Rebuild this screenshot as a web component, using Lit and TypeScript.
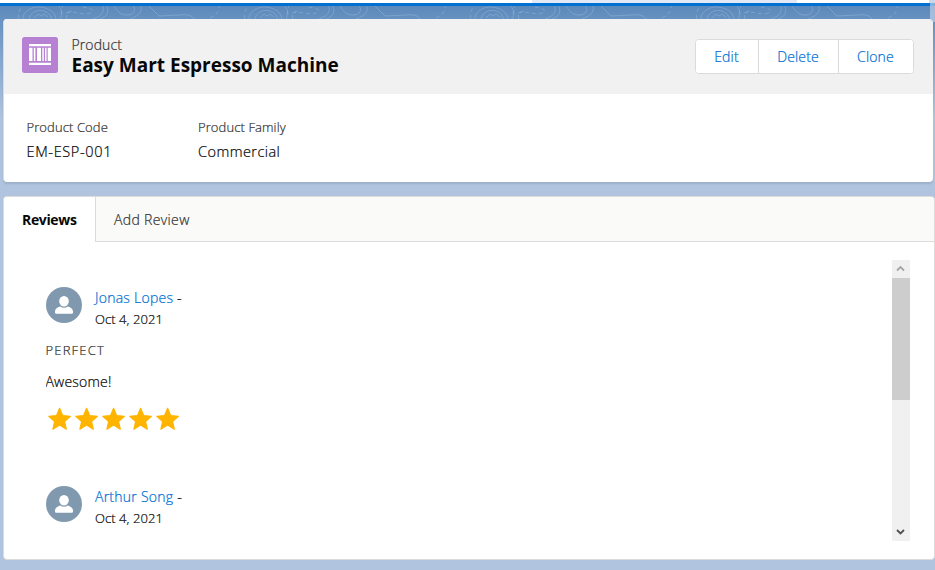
import { LitElement, html, svg, css } from "lit";
import { customElement, property } from "lit/decorators.js";

interface Review { author: string; date: string; title?: string; body?: string; rating?: number; }

const REVIEWS: Review[] = [
  { author: "Jonas Lopes", date: "Oct 4, 2021", title: "PERFECT", body: "Awesome!", rating: 5 },
  { author: "Arthur Song", date: "Oct 4, 2021" },
];

const STAR = "M12 1.300 15 8.600 22.800 9.300 16.900 14.500 18.700 22.200 12 18.100 5.300 22.200 7.100 14.500 1.200 9.300 9 8.600Z";

@customElement("review-item")
export class ReviewItem extends LitElement {
  @property({ attribute: false }) review!: Review;

  static styles = css`
    :host { display: block; height: 199px; color: #080707; }
    .who { display: flex; gap: 13px; height: 42px; }
    .avatar { width: 36px; height: 36px; flex: none; }
    .meta { line-height: 21px; white-space: nowrap; }
    .author { font-size: 14px; letter-spacing: 0.25px; }
    .author a { color: #0070d2; text-decoration: none; }
    .date { font-size: 13px; line-height: 22px; letter-spacing: 0.07px; }
    .title { margin-top: 11px; margin-left: -.5px; font-size: 13px; line-height: 20px; letter-spacing: 1.2px; color: #333; }
    .body { margin-top: 11px; margin-left: -.5px; font-size: 14px; line-height: 21px; letter-spacing: 0.2px; }
    .stars { display: flex; gap: 3px; margin: 15px 0 0 2px; }
    .stars svg { width: 24px; height: 24px; }
  `;

  render() {
    const r = this.review;
    return html`
      <div class="who">
        <svg class="avatar" viewBox="0 0 36 36">
          <circle cx="18" cy="18" r="18" fill="#8199af"></circle>
          <ellipse cx="18" cy="14.200" rx="4.800" ry="5.300" fill="#fff"></ellipse>
          <path d="M9 24.600c0-3 2.500-4.300 5.200-5.200 2.300 1.800 5.300 1.800 7.600 0 2.700.9 5.200 2.200 5.200 5.200v.6c0 1-.7 1.600-1.600 1.600H10.600C9.700 26.800 9 26.200 9 25.200Z" fill="#fff"></path>
        </svg>
        <div class="meta">
          <div class="author"><a>${r.author}</a> -</div>
          <div class="date">${r.date}</div>
        </div>
      </div>
      ${r.title ? html`<div class="title">${r.title}</div>` : null}
      ${r.body ? html`<div class="body">${r.body}</div>` : null}
      ${r.rating
        ? html`<div class="stars">${Array.from({ length: r.rating }, () => html`
            <svg viewBox="0 0 24 24"><path transform="translate(-.4 0)" d=${STAR} fill="#ffb400" stroke="#ffb400" stroke-width="1.200" stroke-linejoin="round"></path></svg>`)}</div>`
        : null}
    `;
  }
}

@customElement("app-root")
export class AppRoot extends LitElement {
  static styles = css`
    :host {
      display: flex; flex-direction: column; position: relative; box-sizing: border-box;
      width: 935px; height: 570px; overflow: hidden;
      font-family: "Open Sans", "Noto Sans", sans-serif; font-weight: 300; color: #080707;
      -webkit-text-stroke-width: .22px;
      background: linear-gradient(#5c88ba 6px, #6a95c4 24px, #b0c4df 118px);
    }
    * { box-sizing: border-box; }
    .topbar { height: 6px; flex: none; border-bottom: 3px solid #0070d2;
      background: linear-gradient(90deg, #fff 532px, #fff 532px, #e0e9f5 532px, #e0e9f5 797px, #fff 797px, #fff 929px, #d3deed 929px);
      background-origin: border-box; }
    .contours { height: 13px; flex: none; display: block; width: 935px; }
    .edge { position: absolute; right: 0; top: 0; width: 5px; height: 22px;
      border-bottom-left-radius: 4px; background: #c5d4e8aa; }
    .card { background: #fff; border-radius: 4px; flex: none; }
    .record { width: 929.500px; height: 163px; margin-left: 3px; overflow: hidden;
      box-shadow: 0 2px 2px rgba(0,0,0,.1); border-left: 1px solid #d5dce6; }
    .head { display: flex; height: 75px; background: #f1f1f1; padding: 18px 18.500px 0 18px; }
    .icon { width: 36px; height: 36px; margin-right: 13.500px; }
    .names { flex: 1; white-space: nowrap; }
    .kind { font-size: 14px; line-height: 16px; color: #333; letter-spacing: .1px; }
    .name { font-size: 19px; line-height: 24px; font-weight: 700; letter-spacing: 0; -webkit-text-stroke-width: 0; }
    .actions { display: flex; height: 35px; margin-top: 2px; border: 1px solid #dddbda; border-radius: 4px;
      background: #fff; overflow: hidden; }
    .actions button { border: 0; border-left: 1px solid #dddbda; padding: 0 1px 0 0; background: #fff; width: 80px;
      font: 300 14px/33px "Open Sans", sans-serif; letter-spacing: .15px; color: #0070d2; -webkit-text-stroke-width: .22px; }
    .actions button:first-child { border-left: 0; width: 62px; }
    .actions button:last-child { width: 75px; }
    .fields { display: flex; padding: 23px 22.500px 0; }
    .field { width: 171.500px; white-space: nowrap; }
    .label { font-size: 13px; line-height: 21px; color: #333; letter-spacing: .1px; }
    .value { font-size: 14.500px; line-height: 27px; letter-spacing: .45px; }
    .value.code { letter-spacing: .65px; }
    .panel { width: 932px; height: 364px; margin: 14px 0 0 3px; border: 1px solid #dddbda; overflow: hidden; }
    .tabs { display: flex; height: 45px; background: #fafaf9; }
    .tab { font-size: 14px; line-height: 45px; padding-left: 18px; color: #333; flex: 1;
      border-bottom: 1px solid #dddbda; letter-spacing: .35px; }
    .tab.active { flex: none; width: 92px; color: #080707; font-weight: 700; background: #fff;
      border-right: 1px solid #dddbda; border-bottom: 0; letter-spacing: -.35px; -webkit-text-stroke-width: 0; }
    .content { display: flex; justify-content: space-between; height: 281px; margin: 18px 24px 0 42px; overflow: hidden; }
    .list { padding-top: 27px; }
    .scroll { width: 18px; height: 281px; background: #f0f0f0; display: flex; flex-direction: column; }
    .scroll svg { width: 18px; height: 18px; flex: none; }
    .thumb { height: 122px; background: #cdcdcd; }
    .track { flex: 1; }
  `;

  private contourTile(x: number) {
    return svg`<g transform="translate(${x} 0)">
      <path d="M-17 13C-18 7-9 0 0 1S15 6 16 13M-11 13C-10 6-2 3 4 5S10 10 12 13M-6 12-2 8 1 10 4 8 8 11M20 13C24 7 21 2 17-2M60 13C69 10 69 4 66-2M53 13C63 10 65 4 62-2M73-2C77 5 80 9 87 9S97 4 92-2M90 13C101 9 103 4 100-2M107-2 119 10 140 9C149 8 152 10 154 13"></path>
      <path stroke-dasharray="4 3" d="M-21 13C-23 5-19 2-16-2M26 7C35 4 43 10 50 7S49 2 43 1M27 13C25 8 28 5 33 5M170 12C178 8 180 4 179-2M23-2 21 8"></path>
    </g>`;
  }

  render() {
    return html`
      <div class="topbar"></div>
      <svg class="contours" viewBox="0 0 935 13" fill="none" stroke="#a8c4e3" stroke-opacity=".36">
        ${[-186, 40, 266, 492, 718].map((x) => this.contourTile(x))}
      </svg>
      <div class="edge"></div>
      <section class="card record">
        <header class="head">
          <svg class="icon" viewBox="0 0 36 36">
            <rect width="36" height="36" rx="2.500" fill="#b781d3"></rect>
            <path fill="#fff" d="M7 7h22v2.200H7zM7 25.800h22v2.200H7zM7 10.800h3.500v13.200H7zM11.800 10.800h1.600v13.200h-1.600zM15 10.800h4v13.200h-4zM20.300 10.800h1.500v13.200h-1.500zM23 10.800h1.500v13.200h-1.500zM25.700 10.800h3.300v13.200h-3.300z"></path>
          </svg>
          <div class="names">
            <div class="kind">Product</div>
            <div class="name">Easy Mart Espresso Machine</div>
          </div>
          <div class="actions"><button>Edit</button><button>Delete</button><button>Clone</button></div>
        </header>
        <div class="fields">
          <div class="field"><div class="label">Product Code</div><div class="value code">EM-ESP-001</div></div>
          <div class="field"><div class="label">Product Family</div><div class="value">Commercial</div></div>
        </div>
      </section>
      <section class="card panel">
        <nav class="tabs"><div class="tab active">Reviews</div><div class="tab">Add Review</div></nav>
        <div class="content">
          <div class="list">${REVIEWS.map((r) => html`<review-item .review=${r}></review-item>`)}</div>
          <div class="scroll">
            <svg viewBox="0 0 18 18"><path d="M5 10.500 8.500 7 12 10.500" fill="none" stroke="#a5a5a5" stroke-width="1.800"></path></svg>
            <div class="thumb"></div><div class="track"></div>
            <svg viewBox="0 0 18 18"><path d="M5 7 8.500 10.500 12 7" fill="none" stroke="#505050" stroke-width="1.800"></path></svg>
          </div>
        </div>
      </section>
    `;
  }
}
